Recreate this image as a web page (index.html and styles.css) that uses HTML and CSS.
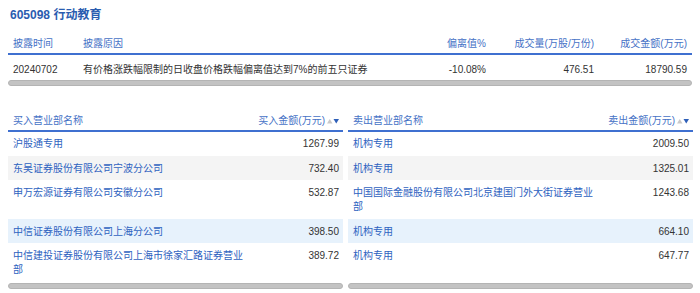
FILE: index.html
```html
<!DOCTYPE html>
<html lang="zh-CN">
<head>
<meta charset="utf-8">
<title>605098 行动教育</title>
<link rel="stylesheet" href="styles.css">
</head>
<body>
<div class="page">
  <h1 class="title">605098 行动教育</h1>

  <table class="grid top">
    <colgroup>
      <col class="c-date"><col><col class="c-dev"><col class="c-vol"><col class="c-amt">
    </colgroup>
    <thead>
      <tr>
        <th>披露时间</th>
        <th>披露原因</th>
        <th class="num">偏离值%</th>
        <th class="num">成交量(万股/万份)</th>
        <th class="num">成交金额(万元)</th>
      </tr>
    </thead>
    <tbody>
      <tr>
        <td>20240702</td>
        <td>有价格涨跌幅限制的日收盘价格跌幅偏离值达到7%的前五只证券</td>
        <td class="num">-10.08%</td>
        <td class="num">476.51</td>
        <td class="num">18790.59</td>
      </tr>
    </tbody>
  </table>
  <div class="scrollbar"></div>

  <table class="grid deal">
    <colgroup>
      <col class="c-buy-name"><col class="c-money"><col class="c-gap"><col class="c-sell-name"><col class="c-money">
    </colgroup>
    <thead>
      <tr>
        <th>买入营业部名称</th>
        <th class="num">买入金额(万元)<span class="sort"><svg width="12" height="6" viewBox="0 0 12 6"><path d="M0 5.5 L2.75 1 L5.5 5.5 Z" fill="#c9c9c9"/><path d="M6.5 1 L12 1 L9.25 5.5 Z" fill="#2d5fb8"/></svg></span></th>
        <th class="gap"></th>
        <th>卖出营业部名称</th>
        <th class="num">卖出金额(万元)<span class="sort"><svg width="12" height="6" viewBox="0 0 12 6"><path d="M0 5.5 L2.75 1 L5.5 5.5 Z" fill="#c9c9c9"/><path d="M6.5 1 L12 1 L9.25 5.5 Z" fill="#2d5fb8"/></svg></span></th>
      </tr>
    </thead>
    <tbody>
      <tr>
        <td class="link">沪股通专用</td><td class="num">1267.99</td>
        <td class="gap"></td>
        <td class="link">机构专用</td><td class="num">2009.50</td>
      </tr>
      <tr class="alt">
        <td class="link">东吴证券股份有限公司宁波分公司</td><td class="num">732.40</td>
        <td class="gap"></td>
        <td class="link">机构专用</td><td class="num">1325.01</td>
      </tr>
      <tr>
        <td class="link">申万宏源证券有限公司安徽分公司</td><td class="num">532.87</td>
        <td class="gap"></td>
        <td class="link">中国国际金融股份有限公司北京建国门外大街证券营业部</td><td class="num">1243.68</td>
      </tr>
      <tr class="hl">
        <td class="link">中信证券股份有限公司上海分公司</td><td class="num">398.50</td>
        <td class="gap"></td>
        <td class="link">机构专用</td><td class="num">664.10</td>
      </tr>
      <tr>
        <td class="link">中信建投证券股份有限公司上海市徐家汇路证券营业部</td><td class="num">389.72</td>
        <td class="gap"></td>
        <td class="link">机构专用</td><td class="num">647.77</td>
      </tr>
    </tbody>
  </table>
  <div class="scroll-pair">
    <div class="scrollbar"></div>
    <div class="scrollbar"></div>
  </div>
</div>
</body>
</html>
```

FILE: styles.css
```css
html, body {
  margin: 0;
  padding: 0;
  background: #ffffff;
}

body {
  font-family: "Liberation Sans", "Noto Sans CJK SC", sans-serif;
  font-size: 10px;
  color: #333333;
}

.page {
  padding: 7px 8px 0 8px;
}

.title {
  margin: 0 0 9px 2px;
  font-size: 12px;
  line-height: 16px;
  font-weight: bold;
  color: #2a5db0;
}

.grid {
  border-collapse: collapse;
  table-layout: fixed;
}

.grid th {
  font-weight: normal;
  text-align: left;
  color: #4672c6;
  line-height: 14.5px;
  padding: 5px 5px 1px 5px;
  border-bottom: 2px solid #3f70d0;
  white-space: nowrap;
}

.grid td {
  line-height: 14.5px;
  vertical-align: top;
  color: #333333;
}

.grid .num {
  text-align: right;
}

/* top table */
.top {
  width: 100%;
}

.c-date { width: 70px; }
.c-dev { width: 80px; }
.c-vol { width: 108px; }
.c-amt { width: 93px; }

.top td {
  padding: 8px 5px 2px 5px;
  white-space: nowrap;
}

.scrollbar {
  height: 4px;
  margin-top: 1px;
  background: #c3c3c3;
  border: 1px solid #b4b4b4;
  border-radius: 3px;
}

/* bottom table */
.deal {
  width: 685px;
  margin-top: 23px;
}

.c-buy-name { width: 245px; }
.c-sell-name { width: 255px; }
.c-money { width: 90px; }
.c-gap { width: 5px; }

.deal td {
  padding: 5.75px 5px 4px 5px;
}

.deal th.num,
.deal td.num {
  padding-right: 4px;
}

.deal th.gap {
  border-bottom: none;
  padding: 0;
}

.deal td.gap {
  padding: 0;
  background: #ffffff;
}

.deal td.link {
  color: #2e62c0;
}

.deal tr.alt td {
  background: #f4f4f4;
}

.deal tr.hl td {
  background: #e7f2fc;
}

.deal tr td.gap {
  background: #ffffff;
}

.scroll-pair {
  display: grid;
  grid-template-columns: 335px 345px;
  column-gap: 5px;
  width: 685px;
}

.sort {
  display: inline-block;
  margin-left: 2px;
}

.sort svg {
  display: block;
}
```
